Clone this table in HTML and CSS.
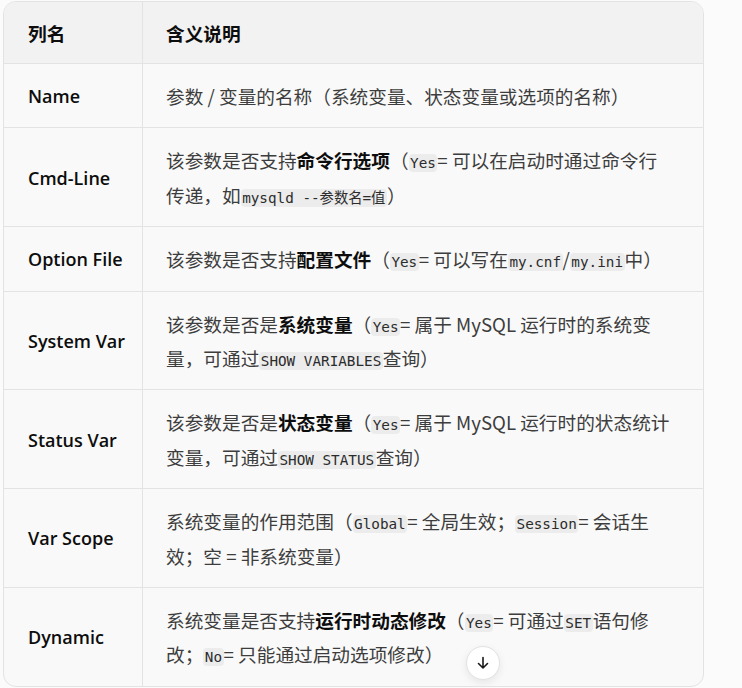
FILE: index.html
```html
<!DOCTYPE html>
<html lang="zh-CN">
<head>
<meta charset="utf-8">
<title>参数说明</title>
<link rel="stylesheet" href="styles.css">
</head>
<body>
<div class="page">
  <div class="table-wrap">
    <table class="params">
      <thead>
        <tr><th class="col-name">列名</th><th>含义说明</th></tr>
      </thead>
      <tbody>
        <tr><td class="col-name">Name</td><td>参数 / 变量的名称（系统变量、状态变量或选项的名称）</td></tr>
        <tr><td class="col-name">Cmd-Line</td><td>该参数是否支持<b>命令行选项</b>（<code>Yes</code>= 可以在启动时通过命令行传递，如<code>mysqld --参数名=值</code>）</td></tr>
        <tr><td class="col-name">Option File</td><td>该参数是否支持<b>配置文件</b>（<code>Yes</code>= 可以写在<code>my.cnf</code>/<code>my.ini</code>中）</td></tr>
        <tr><td class="col-name">System Var</td><td>该参数是否是<b>系统变量</b>（<code>Yes</code>= 属于 MySQL 运行时的系统变量，可通过<code>SHOW VARIABLES</code>查询）</td></tr>
        <tr><td class="col-name">Status Var</td><td>该参数是否是<b>状态变量</b>（<code>Yes</code>= 属于 MySQL 运行时的状态统计变量，可通过<code>SHOW STATUS</code>查询）</td></tr>
        <tr><td class="col-name">Var Scope</td><td>系统变量的作用范围（<code>Global</code>= 全局生效；<code>Session</code>= 会话生效；空 = 非系统变量）</td></tr>
        <tr><td class="col-name">Dynamic</td><td>系统变量是否支持<b>运行时动态修改</b>（<code>Yes</code>= 可通过<code>SET</code>语句修改；<code>No</code>= 只能通过启动选项修改）</td></tr>
      </tbody>
    </table>
    <button class="scroll-down" aria-label="滚动到底部">
      <svg width="14" height="14" viewBox="0 0 14 14" fill="none" stroke="#1a1a1a" stroke-width="1.6" stroke-linecap="round" stroke-linejoin="round"><path d="M7 1.5v10.5M2.5 7.5 7 12l4.5-4.5"/></svg>
    </button>
  </div>
</div>
</body>
</html>
```

FILE: styles.css
```css
html, body {
  margin: 0;
  padding: 0;
  background: #fbfbfb;
}

.page {
  padding: 1px 38px 0 3px;
  font-family: "Noto Sans CJK SC", "Noto Sans", sans-serif;
  font-size: 18.67px;
  line-height: 34.4px;
  color: #3d3d3d;
}

.table-wrap {
  position: relative;
  border: 1px solid #e3e3e3;
  border-radius: 13px;
  overflow: hidden;
  background: #f9f9f9;
}

.params {
  width: 100%;
  border-collapse: separate;
  border-spacing: 0;
  table-layout: fixed;
}

.params th,
.params td {
  text-align: left;
  vertical-align: middle;
  padding: 15px 28px 14px 23px;
  border-bottom: 1px solid #e3e3e3;
}

.params tbody tr:last-child td {
  border-bottom: none;
}

.params th {
  background: #f2f2f2;
  font-weight: 700;
  color: #0d0d0d;
  line-height: 34px;
  padding-top: 14px;
  padding-bottom: 13px;
}

.params .col-name {
  width: 139px;
  box-sizing: border-box;
  border-right: 1px solid #e3e3e3;
  padding-left: 24px;
  padding-right: 8px;
  font-family: "Open Sans", "Noto Sans CJK SC", sans-serif;
  font-size: 18px;
  font-weight: 600;
  color: #0d0d0d;
}

.params th.col-name {
  font-family: "Noto Sans CJK SC", sans-serif;
  font-size: 18.67px;
  font-weight: 700;
}

.params b {
  font-weight: 700;
  color: #0d0d0d;
}

.params code {
  font-family: "DejaVu Sans Mono", "Noto Sans CJK SC", monospace;
  font-size: 14.3px;
  line-height: 1;
  background: #ececec;
  border-radius: 4px;
  padding: 1px 1.5px;
  color: #2b2b2b;
}

.scroll-down {
  position: absolute;
  left: 462px;
  bottom: 6px;
  width: 34px;
  height: 34px;
  border-radius: 50%;
  border: 1px solid #e2e2e2;
  background: #ffffff;
  box-shadow: 0 3px 8px rgba(0, 0, 0, 0.08);
  display: flex;
  align-items: center;
  justify-content: center;
  padding: 0;
}
```
